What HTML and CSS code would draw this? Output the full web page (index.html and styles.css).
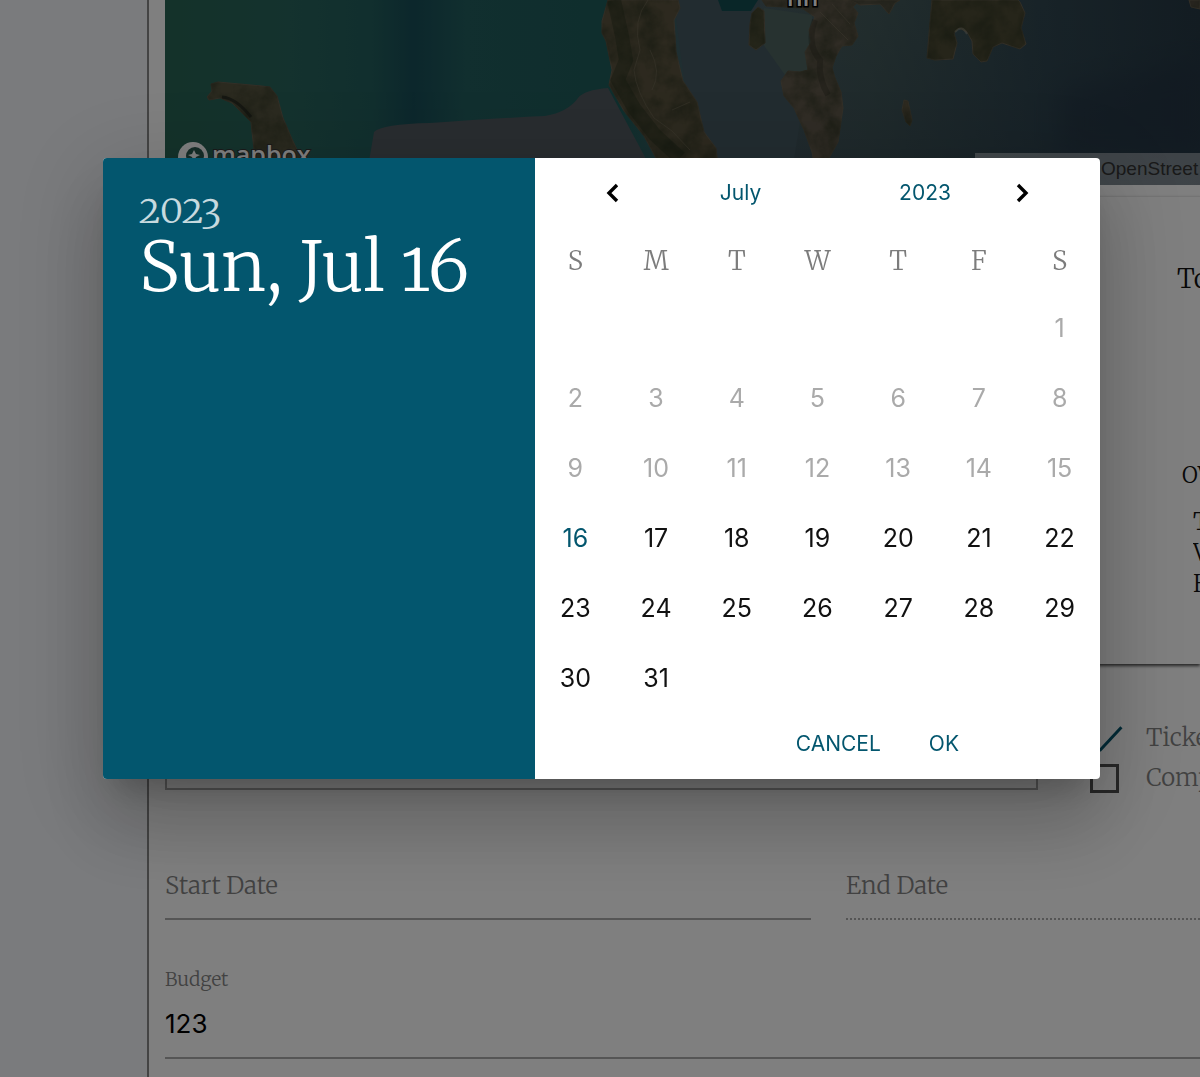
FILE: index.html
```html
<!DOCTYPE html>
<html lang="en">
<head>
<meta charset="utf-8">
<meta name="viewport" content="width=device-width, initial-scale=1">
<title>Select a date</title>
<link rel="stylesheet" href="styles.css">
</head>
<body>
<div class="page">
  <aside class="sidebar"></aside>
  <main class="content">
    <section class="map">
      <svg class="map-art" viewBox="165 0 1035 185" preserveAspectRatio="xMinYMin slice" aria-hidden="true">
        <defs>
          <linearGradient id="sea" x1="0" x2="1" y1="0" y2="0">
            <stop offset="0" stop-color="#286454"/>
            <stop offset=".12" stop-color="#28645c"/>
            <stop offset=".2" stop-color="#225e5c"/>
            <stop offset=".24" stop-color="#184e58"/>
            <stop offset=".29" stop-color="#225e5e"/>
            <stop offset=".44" stop-color="#1e5c5a"/>
            <stop offset=".52" stop-color="#4c5e66"/>
            <stop offset=".68" stop-color="#445a5a"/>
            <stop offset=".85" stop-color="#304650"/>
            <stop offset="1" stop-color="#263844"/>
          </linearGradient>
          <linearGradient id="deep" x1="0" x2="0" y1="0" y2="1">
            <stop offset="0" stop-color="#28404e" stop-opacity="0"/>
            <stop offset="1" stop-color="#283848" stop-opacity=".7"/>
          </linearGradient>
          <filter id="soft" x="-50%" y="-50%" width="200%" height="200%" color-interpolation-filters="sRGB"><feGaussianBlur stdDeviation="12"/></filter>
          <filter id="grain" x="0" y="0" width="100%" height="100%" color-interpolation-filters="sRGB">
            <feTurbulence type="fractalNoise" baseFrequency=".05" numOctaves="5" seed="4" result="n"/>
            <feColorMatrix in="n" values="0 0 0 0 .16  0 0 0 0 .19  0 0 0 0 .12  1.2 0 0 0 -.4" result="dark"/>
            <feComposite in="dark" in2="SourceAlpha" operator="in" result="spots"/>
            <feMerge><feMergeNode in="SourceGraphic"/><feMergeNode in="spots"/></feMerge>
          </filter>
        </defs>
        <rect x="165" width="1035" height="185" fill="url(#sea)"/>
        <path d="M674 0H1200V185H720Z" fill="url(#deep)" opacity=".5"/>
        <path d="M365 185L374 132Q382 124 430 123Q500 118 545 116Q568 112 578 98Q584 90 608 88L660 185Z" fill="#51595f"/>
        <path d="M674 0L680 50L686 90L716 185H790L808 70L760 20V0Z" fill="#445860"/>
        <path d="M764 8L812 15L812 70L785 75L760 40Z" fill="#4e6460"/>
        <path d="M718 0H758L751 11H722Z" fill="#124c50"/>
        <path d="M1060 90L1200 60V155H1060Z" fill="#202e40" opacity=".4" filter="url(#soft)"/>
        <g filter="url(#grain)" stroke="#665e4e" stroke-width="1">
          <path fill="#56543f" d="M211 84L218 82L262 86L270 87L277 96L283 118L292 139L301 158L298 184H258L252 132L251 122L243 114L232 103L220 98L209 100L207 97L212 91Z"/>
          <path fill="#5a533e" d="M608 0L602 21L602 33L606 41L612 70L609 85L624 111L644 136L658 162L720 184L716 148L704 132L697 102L683 81L676 52L674 20L680 8L678 0Z"/>
          <path fill="#4c4c35" d="M752 13L758 7L764 11L765 43L756 50L749 45L750 24Z"/>
          <path fill="#60584a" d="M762 0L766 6L802 8L815 17L809 30L811 42L805 52L808 70L800 72L788 71L781 81L784 96L794 108L804 130L812 152L818 184H825L829 158L838 142L843 108L841 92L835 78L832 68L836 56L842 46L852 45L858 36L854 23L858 13L853 7L860 0Z"/>
          <path fill="#4c4a34" d="M932 0L929 34L927 58L935 60L953 59L957 43L954 33L959 28L967 32L972 41L973 54L981 62L987 61L993 47L1002 43L1020 49L1026 44L1021 28L1025 13L1020 2L1018 0Z"/>
          <path fill="#504e40" d="M850 0L860 5L880 4L889 14L895 3L900 0Z"/>
          <path fill="#5c5440" d="M904 100L908 101L912 120L910 126L906 122L902 110Z"/>
          <path fill="#504a3e" d="M1189 0L1191 7L1200 9V0Z"/>
        </g>
        <g fill="none" stroke="#7a725e" opacity=".45">
          <path d="M648 0Q632 20 640 50L634 70Q636 92 654 118L672 131L690 150"/>
          <path d="M672 110L690 102M650 50Q662 72 652 90"/>
          <path d="M820 12L848 40M832 4L850 24"/>
          <path stroke="#a09c8c" stroke-width="2" d="M955 32Q962 24 967 34"/>
        </g>
        <path d="M222 97Q236 98 251 117" fill="none" stroke="#20241c" stroke-width="3" opacity=".7"/>
        <path d="M815 20Q806 44 820 60Q818 78 828 95" fill="none" stroke="#2c2c20" stroke-width="6" opacity=".35"/>
        <path d="M614 0L622 36L626 60L618 80L634 108L655 135L680 158" fill="none" stroke="#1e2c18" stroke-width="14" opacity=".35"/>
        <text class="map-place" x="787" y="6">nn</text>
        <circle cx="193" cy="157" r="15" fill="#fff"/>
        <circle cx="195" cy="156" r="9" fill="#2a5a50"/>
        <path d="M194 150L196 154L200 155L196 157L194 162L192 157L188 155L192 154Z" fill="#fff"/>
        <text class="map-logo" x="212" y="164">mapbox</text>
      </svg>
      <div class="attribution"><a href="#osm">OpenStreet</a></div>
    </section>
    <section class="summary">
      <h2 class="summary-title">To</h2>
      <h3 class="summary-heading">OV</h3>
      <ul class="summary-list"><li>T</li><li>V</li><li>H</li></ul>
    </section>
    <form class="form">
      <div class="details">
        <textarea class="notes" aria-label="Notes"></textarea>
        <div class="options">
          <label class="option"><input class="tick" type="checkbox" checked><span>Ticke</span></label>
          <label class="option"><input class="tick" type="checkbox"><span>Comp</span></label>
        </div>
      </div>
      <div class="dates">
        <input class="field" type="text" placeholder="Start Date" aria-label="Start Date">
        <input class="field field-off" type="text" placeholder="End Date" aria-label="End Date" disabled>
      </div>
      <label class="budget-label" for="budget">Budget</label>
      <input class="field budget" id="budget" type="text" value="123">
    </form>
  </main>
</div>

<div class="backdrop">
  <div class="dialog" role="dialog" aria-modal="true" aria-label="Choose date">
    <header class="banner">
      <div class="banner-year">2023</div>
      <div class="banner-date">Sun, Jul 16</div>
    </header>
    <div class="picker">
      <div class="nav">
        <button class="arrow" type="button" aria-label="Previous month"><svg width="14" height="20" viewBox="0 0 14 20"><path d="M11 2L3 10L11 18"/></svg></button>
        <button class="text-button" type="button">July</button>
        <button class="text-button" type="button">2023</button>
        <button class="arrow" type="button" aria-label="Next month"><svg width="14" height="20" viewBox="0 0 14 20"><path d="M3 2L11 10L3 18"/></svg></button>
      </div>
      <table class="calendar">
        <thead><tr><th>S</th><th>M</th><th>T</th><th>W</th><th>T</th><th>F</th><th>S</th></tr></thead>
        <tbody>
          <tr><td></td><td></td><td></td><td></td><td></td><td></td><td><button class="day" disabled>1</button></td></tr>
          <tr><td><button class="day" disabled>2</button></td><td><button class="day" disabled>3</button></td><td><button class="day" disabled>4</button></td><td><button class="day" disabled>5</button></td><td><button class="day" disabled>6</button></td><td><button class="day" disabled>7</button></td><td><button class="day" disabled>8</button></td></tr>
          <tr><td><button class="day" disabled>9</button></td><td><button class="day" disabled>10</button></td><td><button class="day" disabled>11</button></td><td><button class="day" disabled>12</button></td><td><button class="day" disabled>13</button></td><td><button class="day" disabled>14</button></td><td><button class="day" disabled>15</button></td></tr>
          <tr><td><button class="day today">16</button></td><td><button class="day">17</button></td><td><button class="day">18</button></td><td><button class="day">19</button></td><td><button class="day">20</button></td><td><button class="day">21</button></td><td><button class="day">22</button></td></tr>
          <tr><td><button class="day">23</button></td><td><button class="day">24</button></td><td><button class="day">25</button></td><td><button class="day">26</button></td><td><button class="day">27</button></td><td><button class="day">28</button></td><td><button class="day">29</button></td></tr>
          <tr><td><button class="day">30</button></td><td><button class="day">31</button></td><td></td><td></td><td></td><td></td><td></td></tr>
        </tbody>
      </table>
      <div class="actions">
        <button class="text-button" type="button">CANCEL</button>
        <button class="text-button" type="button">OK</button>
      </div>
    </div>
  </div>
</div>
</body>
</html>
```
FILE: styles.css
```css
* { box-sizing: border-box; }

:root {
  --teal: #03566e;
  --serif: Merriweather, "Liberation Serif", serif;
  --sans: Inter, "Liberation Sans", sans-serif;
}

body {
  margin: 0;
  font-family: var(--serif);
  font-weight: 300;
  background: #fff;
  color: #111;
}

button { border: 0; padding: 0; background: none; font-family: var(--sans); }

.page { display: flex; min-height: 100vh; overflow: hidden; }

.sidebar { flex: 0 0 147px; background: #f5f7fa; }

.content {
  flex: 1;
  min-width: 0;
  padding-left: 16px;
  border-left: 2px solid #888;
}

/* Map */
.map { position: relative; height: 185px; overflow: hidden; }
.map-art { display: block; width: 100%; height: 100%; }
.map-place {
  font: 500 26px var(--sans);
  fill: #fff;
  stroke: #000;
  stroke-width: 3px;
  paint-order: stroke;
}
.map-logo {
  font: 600 25px "Open Sans", sans-serif;
  fill: #fff;
  stroke: #333;
  stroke-width: 2px;
  paint-order: stroke;
}
.attribution {
  position: absolute;
  right: 0;
  bottom: 0;
  width: 225px;
  padding-left: 126px;
  background: rgba(255, 255, 255, .4);
  font: 19px/32px "Liberation Sans", sans-serif;
  white-space: nowrap;
}
.attribution a { color: #333; text-decoration: none; }

/* Summary card */
.summary {
  height: 468px;
  margin-top: 11px;
  padding: 64px 0 0;
  border-top: 1px solid #e8e8e8;
  box-shadow: 0 2px 3px rgba(0, 0, 0, .7);
  display: flex;
  flex-direction: column;
  align-items: flex-end;
}
.summary-title, .summary-heading { margin: 0; font-weight: 300; white-space: nowrap; overflow: hidden; }
.summary-title { width: 23px; font-size: 26px; line-height: 36px; }
.summary-heading { width: 18px; margin-top: 160px; font-size: 22px; line-height: 36px; }
.summary-list {
  width: 7px;
  margin: 13px 0 0;
  padding: 0;
  overflow: hidden;
  list-style: none;
  font-size: 24px;
  line-height: 31px;
}

/* Form */
.details { display: grid; grid-template-columns: minmax(0, 873fr) minmax(0, 110fr); gap: 52px; }
.notes { height: 126px; border: 2px solid #aaa; background: none; resize: none; }
.options { display: flex; flex-direction: column; justify-content: flex-end; }
.option {
  display: flex;
  align-items: center;
  gap: 27px;
  height: 40px;
  color: #848484;
  font-size: 24px;
  line-height: 40px;
}
.options .option:last-child { margin-bottom: -8px; }
.tick {
  appearance: none;
  flex: none;
  width: 29px;
  height: 29px;
  margin: 0;
  border: 3px solid #505050;
}
.tick:checked { position: relative; border-color: transparent; }
.tick:checked::after {
  content: "";
  position: absolute;
  left: 16px;
  top: -4px;
  width: 3px;
  height: 32px;
  background: var(--teal);
  transform: rotate(43deg);
}

.dates { display: grid; grid-template-columns: 646fr 354fr; gap: 35px; margin-top: 64px; }
.field {
  display: block;
  width: 100%;
  min-width: 0;
  height: 66px;
  padding: 0 0 2px;
  border: 0;
  border-bottom: 2px solid #aaa;
  border-radius: 0;
  background: none;
  color: #000;
  font: 300 24px var(--serif);
}
.field::placeholder { color: #848484; opacity: 1; }
.field-off { border-bottom-style: dotted; }
.budget-label { display: block; margin-top: 45px; color: #848484; font-size: 19px; line-height: 28px; }
.field.budget { padding-bottom: 4px; font: 26px var(--sans); }

/* Date dialog */
.backdrop {
  position: fixed;
  inset: 0;
  padding: 158px 100px 0 103px;
  background: rgba(0, 0, 0, .5);
}
.dialog {
  display: grid;
  grid-template-columns: 432fr 565fr;
  border-radius: 4px;
  overflow: hidden;
  background: #fff;
  box-shadow: 0 22px 30px -14px rgba(0, 0, 0, .2), 0 48px 76px 6px rgba(0, 0, 0, .14), 0 18px 92px 16px rgba(0, 0, 0, .12);
}
.banner {
  padding: 32px 36px;
  background: var(--teal);
  color: #fff;
  white-space: nowrap;
  font-variant-numeric: oldstyle-nums;
}
.banner-year { color: rgba(255, 255, 255, .78); font-size: 38px; line-height: 40px; }
.banner-date { font-size: 69px; line-height: 74px; }

.nav {
  display: grid;
  grid-template-columns: 40px 215fr 154fr 40px;
  align-items: center;
  height: 70px;
  padding: 0 58px;
}
.arrow { height: 40px; }
.arrow svg { display: block; margin: auto; fill: none; stroke: #000; stroke-width: 3.4; }
.text-button { color: var(--teal); font-size: 21px; line-height: 40px; }

.calendar { width: 100%; table-layout: fixed; border-collapse: collapse; }
.calendar th { height: 65px; padding: 0; color: #7c7c7c; font-size: 26px; font-weight: 300; }
.calendar td { height: 70px; padding: 0; text-align: center; }
.day { width: 60px; height: 60px; color: #111; font-size: 25px; line-height: 30px; }
.day:disabled { color: #aaa; }
.today { color: var(--teal); }

.actions { display: flex; justify-content: flex-end; gap: 48px; height: 66px; padding: 0 141px 4px 0; }
```
